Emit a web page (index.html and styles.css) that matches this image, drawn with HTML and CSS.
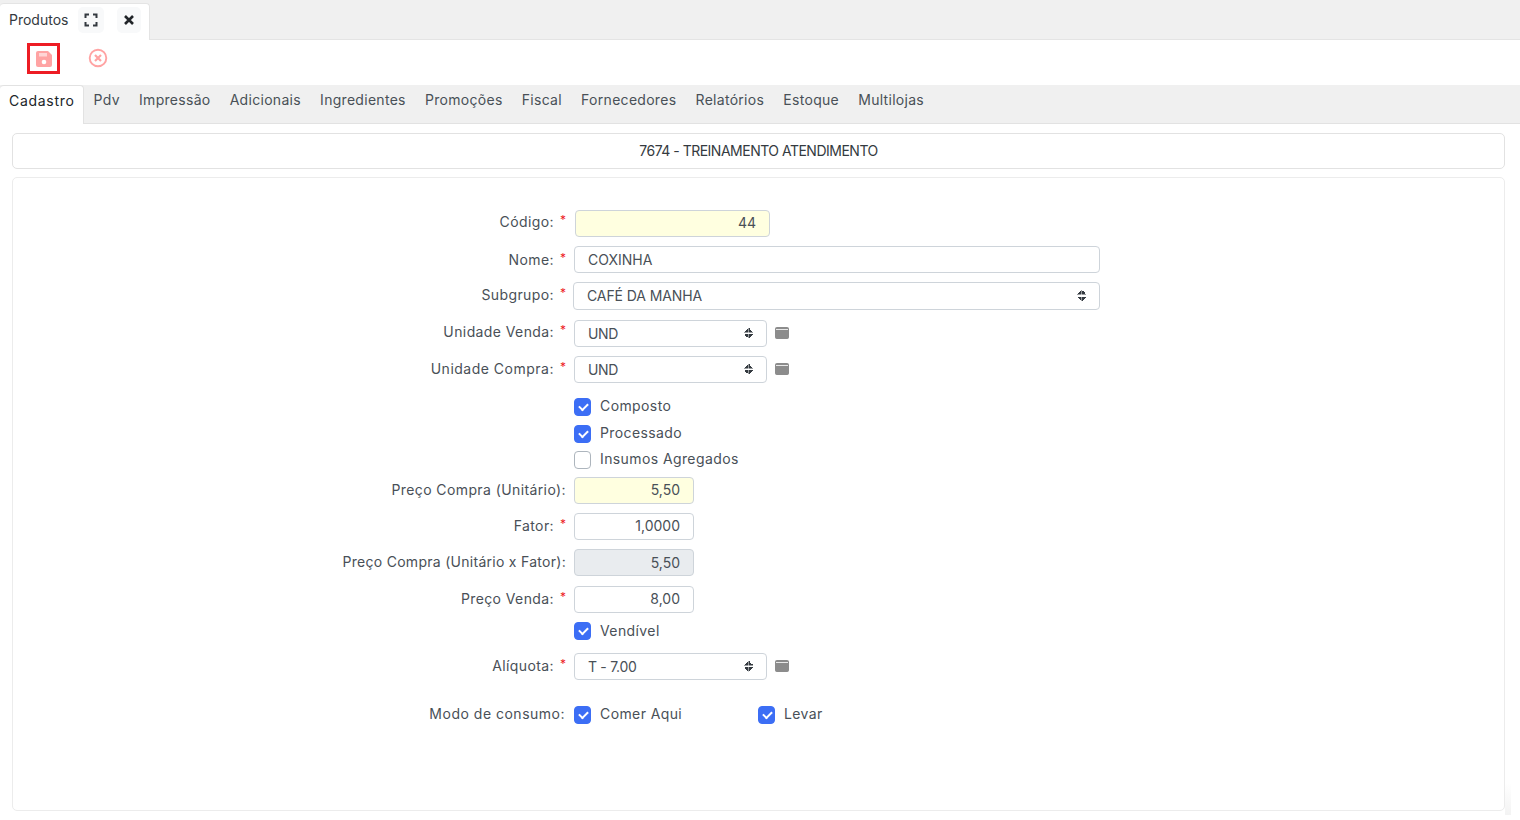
FILE: index.html
```html
<!DOCTYPE html>
<html lang="pt">
<head>
<meta charset="utf-8">
<title>Produtos</title>
<link rel="stylesheet" href="styles.css">
</head>
<body>
<div class="winbar">
  <div class="wintab">
    <span class="wintab-title">Produtos</span>
    <span class="wintab-btn wb-expand"><svg width="14" height="14" viewBox="0 0 14 14"><path d="M1.5 5V1.5H5M9 1.5h3.5V5M12.5 9v3.5H9M5 12.5H1.5V9" fill="none" stroke="#343a40" stroke-width="2"/></svg></span>
    <span class="wintab-btn wb-close"><svg width="12" height="12" viewBox="0 0 12 12"><path d="M2 2l8 8M10 2l-8 8" fill="none" stroke="#212529" stroke-width="2.6"/></svg></span>
  </div>
</div>
<div class="toolbar">
  <button class="tool tool-save"><svg width="18" height="18" viewBox="0 0 18 18"><path d="M3 1h10l4 4v10a2 2 0 0 1-2 2H3a2 2 0 0 1-2-2V3a2 2 0 0 1 2-2z" fill="#ffa3a3"/><rect x="4" y="3" width="8" height="3.5" fill="#ffd5d5"/><circle cx="9" cy="12" r="2.3" fill="#fff"/></svg></button>
  <button class="tool tool-cancel"><svg width="20" height="20" viewBox="0 0 20 20"><circle cx="10" cy="10" r="8.3" fill="none" stroke="#ffa3a3" stroke-width="1.9"/><path d="M7 7l6 6M13 7l-6 6" fill="none" stroke="#ffa3a3" stroke-width="2.2"/></svg></button>
</div>
<nav class="tabs">
  <a class="tab active">Cadastro</a><a class="tab">Pdv</a><a class="tab">Impressão</a><a class="tab">Adicionais</a><a class="tab">Ingredientes</a><a class="tab">Promoções</a><a class="tab">Fiscal</a><a class="tab">Fornecedores</a><a class="tab">Relatórios</a><a class="tab">Estoque</a><a class="tab">Multilojas</a>
</nav>
<main class="content">
  <div class="card title-card">7674 - TREINAMENTO ATENDIMENTO</div>
  <form class="card form-card">
    <div class="row r-codigo"><label class="lbl up2">Código:<i class="req">*</i></label><div class="field yellow num w-codigo up">44</div></div>
    <div class="row r-nome"><label class="lbl up0">Nome:<i class="req">*</i></label><div class="field w-nome">COXINHA</div></div>
    <div class="row r-sub"><label class="lbl up2">Subgrupo:<i class="req">*</i></label><div class="field select w-sub up">CAFÉ DA MANHA<span class="carets"></span></div></div>
    <div class="row r-uv"><label class="lbl up2">Unidade Venda:<i class="req">*</i></label><div class="field select w-sel">UND<span class="carets"></span></div><span class="calc"></span></div>
    <div class="row r-uc"><label class="lbl wide">Unidade Compra:<i class="req">*</i></label><div class="field select w-sel">UND<span class="carets"></span></div><span class="calc"></span></div>
    <div class="check-row c-first"><span class="box on"></span><span class="ctext">Composto</span></div>
    <div class="check-row c-next"><span class="box on"></span><span class="ctext">Processado</span></div>
    <div class="check-row c-next2"><span class="box"></span><span class="ctext">Insumos Agregados</span></div>
    <div class="row r-pc"><label class="lbl plain">Preço Compra (Unitário):</label><div class="field yellow num w-num up">5,50</div></div>
    <div class="row r-gap"><label class="lbl">Fator:<i class="req">*</i></label><div class="field num w-num up">1,0000</div></div>
    <div class="row r-gap"><label class="lbl plain tight">Preço Compra (Unitário x Fator):</label><div class="field gray num w-num">5,50</div></div>
    <div class="row r-venda"><label class="lbl">Preço Venda:<i class="req">*</i></label><div class="field num w-num up">8,00</div></div>
    <div class="check-row c-vend"><span class="box on"></span><span class="ctext small-up">Vendível</span></div>
    <div class="row r-aliq"><label class="lbl">Alíquota:<i class="req">*</i></label><div class="field select w-sel">T - 7.00<span class="carets"></span></div><span class="calc"></span></div>
    <div class="row r-modo"><label class="lbl modo up2">Modo de consumo:</label>
      <div class="check-inline ci-a"><span class="box on"></span><span class="ctext">Comer Aqui</span></div>
      <div class="check-inline"><span class="box on"></span><span class="ctext">Levar</span></div>
    </div>
  </form>
  <div class="edge-shade"></div>
</main>
</body>
</html>
```
FILE: styles.css
```css
* { box-sizing: border-box; }
html, body { margin: 0; height: 100%; }
body { background: #fff; font-family: Inter, "Noto Sans", sans-serif; font-size: 14px; color: #495057; overflow: hidden; }
.winbar { height: 40px; background: #f0f0f0; border-bottom: 1px solid #e4e4e4; padding-top: 3px; display: flex; }
.wintab { width: 150px; height: 37px; background: #fff; border: 1px solid #e4e4e4; border-bottom: 0; border-left: 0; border-radius: 4px 4px 0 0; display: flex; align-items: center; padding: 0 0 4px 9px; color: #343a40; }
.wintab-title { width: 69px; padding-bottom: 2px; }
.wintab-btn { width: 26px; height: 26px; background: #f8f9fa; border-radius: 5px; display: flex; align-items: center; justify-content: center; }
.wb-close { width: 24px; margin-left: 13px; }
.toolbar { height: 45px; display: flex; align-items: flex-start; padding: 3px 0 0 27px; }
.tool { border: 0; background: none; padding: 0; display: flex; align-items: center; justify-content: center; }
.tool-save { width: 33px; height: 31px; border: 3px solid #ed1c24; }
.tool-cancel { width: 20px; height: 20px; margin: 5px 0 0 28px; }
.tabs { height: 39px; background: #f0f0f0; border-bottom: 1px solid #e2e2e2; display: flex; }
.tab { padding: 6px 9.6px 0; height: 38px; color: #495057; letter-spacing: .29px; }
.tab.active { width: 84px; height: 39px; padding-left: 9px; background: #fff; border: 1px solid #e2e2e2; border-bottom: 0; border-left: 0; border-radius: 4px 4px 0 0; color: #212529; letter-spacing: .7px; }
.content { padding: 9px 15px 0 12px; position: relative; }
.card { background: #fff; border: 1px solid #e2e2e2; border-radius: 5px; }
.title-card { height: 36px; display: flex; align-items: center; justify-content: center; color: #343a40; padding-bottom: 2px; letter-spacing: -.5px; }
.form-card { margin-top: 8px; height: 634px; padding-top: 32px; border-color: #ececec; }
.edge-shade { position: absolute; right: 9px; top: 659px; width: 6px; height: 32px; background: linear-gradient(to bottom, #fff, #f3f3f3); }
.row { display: flex; align-items: center; height: 27px; }
.lbl { width: 553px; text-align: right; position: relative; padding: 0 12px 2px 0; flex: none; letter-spacing: .4px; }
.lbl.up0 { padding-bottom: 0; }
.lbl.up2 { padding-bottom: 4px; }
.lbl.wide { letter-spacing: .5px; }
.lbl.tight { letter-spacing: .28px; }
.lbl.plain { padding-right: 0; }
.lbl.modo { width: 552px; padding-right: 0; letter-spacing: .5px; }
.req { color: #ed1c24; font-style: normal; font-size: 12px; position: absolute; right: 0; top: -1px; letter-spacing: 0; }
.field { height: 27px; border: 1px solid #ced4da; border-radius: 4px; background: #fff; padding: 0 13px; display: flex; align-items: center; position: relative; flex: none; margin-left: 8px; }
.field.up { padding-bottom: 2px; }
.yellow { background: #ffffe0; }
.gray { background: #e9ecef; }
.num { justify-content: flex-end; }
.w-codigo { width: 195px; margin-left: 9px; }
.w-nome { width: 526px; }
.w-sub { width: 527px; height: 28px; margin-left: 7px; letter-spacing: -.1px; }
.w-sel { width: 193px; letter-spacing: -.3px; }
.w-num { width: 120px; }
.r-nome { margin-top: 9px; }
.r-sub { margin-top: 9px; height: 28px; }
.r-uv { margin-top: 10px; }
.r-uc { margin-top: 9px; }
.r-pc { margin-top: 8px; }
.r-gap { margin-top: 9px; }
.r-venda { margin-top: 10px; }
.r-aliq { margin-top: 13px; }
.r-modo { margin-top: 26px; height: 18px; }
.carets { position: absolute; right: 13px; top: 50%; width: 9px; height: 11px; margin-top: -6px; background:
  linear-gradient(to bottom right, transparent 50%, #343a40 50%) 0 0 / 4.5px 4.5px no-repeat,
  linear-gradient(to bottom left, transparent 50%, #343a40 50%) 4.5px 0 / 4.5px 4.5px no-repeat,
  linear-gradient(to top right, transparent 50%, #343a40 50%) 0 6.5px / 4.5px 4.5px no-repeat,
  linear-gradient(to top left, transparent 50%, #343a40 50%) 4.5px 6.5px / 4.5px 4.5px no-repeat; }
.calc { width: 14px; height: 12px; margin: 0 0 1px 8px; border-radius: 2px; background: #8c8c8c; border: 1px solid #8c8c8c; border-top-width: 2px; box-shadow: inset 0 1px 0 #e8e8e8; }
.check-row { display: flex; align-items: center; height: 18px; margin-left: 561px; letter-spacing: .4px; }
.c-first { margin-top: 15px; }
.c-next { margin-top: 9px; }
.c-next2 { margin-top: 8px; }
.c-vend { margin-top: 9px; }
.check-inline { display: flex; align-items: center; height: 18px; margin-left: 9px; letter-spacing: .4px; }
.ci-a { width: 175px; }
.ctext { padding-bottom: 4px; }
.ctext.small-up { padding-bottom: 2px; }
.box { width: 17px; height: 18px; border: 1px solid #adb5bd; border-radius: 4px; margin-right: 9px; background: #fff; position: relative; flex: none; }
.box.on { background: #3c6ef5; border-color: #3c6ef5; }
.box.on::after { content: ""; position: absolute; left: 4px; top: 4px; width: 7px; height: 4px; border-left: 2px solid #fff; border-bottom: 2px solid #fff; transform: rotate(-45deg); }
```
